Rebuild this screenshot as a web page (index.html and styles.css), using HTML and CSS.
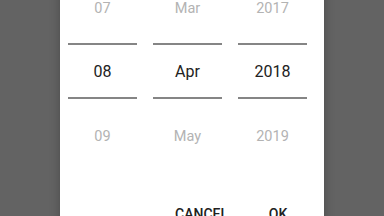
FILE: index.html
```html
<!DOCTYPE html>
<html lang="en">
  <head>
    <meta charset="UTF-8" />
    <meta name="viewport" content="width=device-width, initial-scale=1.0" />
    <title>Date picker</title>
    <link rel="stylesheet" href="styles.css">
  </head>
  <body>
    <div class="dialog">
      <div class="pickers">
        <div class="picker">
          <div class="item">07</div>
          <div class="item current">08</div>
          <div class="item">09</div>
        </div>
        <div class="picker">
          <div class="item">Mar</div>
          <div class="item current">Apr</div>
          <div class="item">May</div>
        </div>
        <div class="picker">
          <div class="item">2017</div>
          <div class="item current">2018</div>
          <div class="item">2019</div>
        </div>
      </div>
      <div class="actions">
        <button class="action-btn">CANCEL</button>
        <button class="action-btn">OK</button>
      </div>
    </div>
  </body>
</html>
```

FILE: styles.css
```css
body {
  margin: 0;
  padding: 0;
  background-color: #636363;
  font-family: Roboto, "Liberation Sans", sans-serif;
  height: 216px;
  overflow: hidden;
}

/* dialog sits cut off at the top of the screen */
.dialog {
  width: 264px;
  margin: -24px 0 0 60px;
  background-color: #ffffff;
  box-shadow: 0 0 10px rgba(0, 0, 0, 0.25);
}

.pickers {
  display: flex;
  gap: 16px;
  padding: 0 17px 0 8px;
}

.picker {
  width: 69px;
  display: flex;
  flex-direction: column;
}

.item {
  height: 64px;
  display: flex;
  align-items: center;
  justify-content: center;
  font-size: 14.5px;
  color: #b3b3b3;
}

.item.current {
  box-sizing: border-box;
  height: 56px;
  margin: 3px 0 5px 0;
  border-top: 2px solid #858585;
  border-bottom: 2px solid #858585;
  font-size: 16px;
  color: #222222;
}

.actions {
  display: flex;
  justify-content: flex-end;
  gap: 10px;
  padding: 38px 14px 8px 0;
}

.action-btn {
  min-width: 64px;
  padding: 0 8px;
  border: none;
  background: none;
  font-family: Roboto, "Liberation Sans", sans-serif;
  font-size: 14px;
  font-weight: 500;
  line-height: 16px;
  color: #212121;
  text-align: center;
}
```
